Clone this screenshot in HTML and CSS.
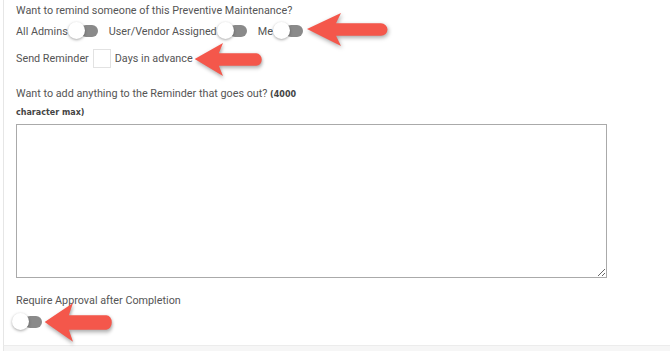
FILE: index.html
```html
<!DOCTYPE html>
<html lang="en">
  <head>
    <meta charset="UTF-8" />
    <meta name="viewport" content="width=device-width, initial-scale=1.0" />
    <title>Reminder settings</title>
    <link rel="stylesheet" href="styles.css">
  </head>
  <body>
    <div class="panel">
      <p class="label first">Want to remind someone of this Preventive Maintenance?</p>
      <div class="row toggles">
        <span>All Admins</span>
        <span class="switch"><span class="knob"></span></span>
        <span class="gap">User/Vendor Assigned</span>
        <span class="switch"><span class="knob"></span></span>
        <span class="gap">Me</span>
        <span class="switch"><span class="knob"></span></span>
      </div>
      <div class="row days">
        <span>Send Reminder</span>
        <input class="days-input" type="text" />
        <span>Days in advance</span>
      </div>
      <p class="label note">Want to add anything to the Reminder that goes out? <b class="max">(4000</b> <b class="max">character max)</b></p>
      <textarea class="message"></textarea>
      <p class="label approval">Require Approval after Completion</p>
      <div class="row">
        <span class="switch solo"><span class="knob"></span></span>
      </div>
    </div>
    <div class="footer"></div>

    <svg class="arrow a1" width="84" height="36" viewBox="0 0 84 38" preserveAspectRatio="none">
      <path d="M2,18 L36,1 L31,12 L76,12 A6.5,6.5 0 0 1 76,25 L31,25 L36,36 Z" />
    </svg>
    <svg class="arrow a2" width="70" height="36" viewBox="0 0 84 38" preserveAspectRatio="none">
      <path d="M2,18 L36,1 L31,12 L76,12 A6.5,6.5 0 0 1 76,25 L31,25 L36,36 Z" />
    </svg>
    <svg class="arrow a3" width="70" height="42" viewBox="0 0 84 38" preserveAspectRatio="none">
      <path d="M2,18 L36,1 L31,12 L76,12 A6.5,6.5 0 0 1 76,25 L31,25 L36,36 Z" />
    </svg>
  </body>
</html>
```

FILE: styles.css
```css
body {
  margin: 0;
  background-color: white;
  font-family: Roboto, "Liberation Sans", sans-serif;
  font-size: 10.8px;
  color: #555;
  height: 351px;
  overflow: hidden;
  position: relative;
}
.panel {
  margin-left: 3px;
  border-left: 1px solid #e6e6e6;
  padding: 3px 0 0 12px;
  height: 342px;
}
.label {
  margin: 0;
  line-height: 16px;
}
.row {
  display: flex;
  align-items: center;
}
.toggles {
  height: 20px;
  margin-top: 2px;
}
.gap {
  margin-left: 11px;
}
.switch {
  position: relative;
  display: inline-block;
  width: 30px;
  height: 18px;
}
.switch::before {
  content: "";
  position: absolute;
  left: 12px;
  top: 3px;
  width: 18px;
  height: 12px;
  border-radius: 6px;
  background-color: #8a8a8a;
}
.knob {
  position: absolute;
  left: 0;
  top: 0;
  width: 17px;
  height: 17px;
  border-radius: 50%;
  background-color: white;
  box-shadow: 0 1px 3px rgba(0, 0, 0, 0.35);
}
.days {
  margin-top: 7px;
  height: 20px;
}
.days-input {
  width: 18px;
  height: 19px;
  padding: 0;
  margin: 0 4px 0 4px;
  border: 1px solid #e2e2e2;
  box-sizing: border-box;
}
.note {
  margin-top: 18px;
  width: 300px;
  line-height: 16.5px;
}
.max {
  font-family: "DejaVu Sans", sans-serif;
  font-weight: 900;
  font-size: 8px;
  color: #444;
}
.message {
  display: block;
  margin-top: 3px;
  width: 591px;
  height: 154px;
  border: 1px solid #aaa;
  box-sizing: border-box;
  padding: 0;
}
.approval {
  margin-top: 15px;
}
.switch.solo {
  margin-top: 4px;
  margin-left: -4px;
}
.footer {
  position: absolute;
  left: 3px;
  right: 0;
  top: 345px;
  height: 10px;
  background-color: #f6f6f6;
  border-top: 1px solid #ececec;
  border-left: 1px solid #e6e6e6;
}
.arrow {
  position: absolute;
  overflow: visible;
}
.arrow path {
  fill: #f4574b;
  filter: drop-shadow(1px 2px 2px rgba(0, 0, 0, 0.35));
}
.a1 {
  left: 305px;
  top: 12px;
}
.a2 {
  left: 193px;
  top: 42px;
}
.a3 {
  left: 43px;
  top: 302px;
}
```
